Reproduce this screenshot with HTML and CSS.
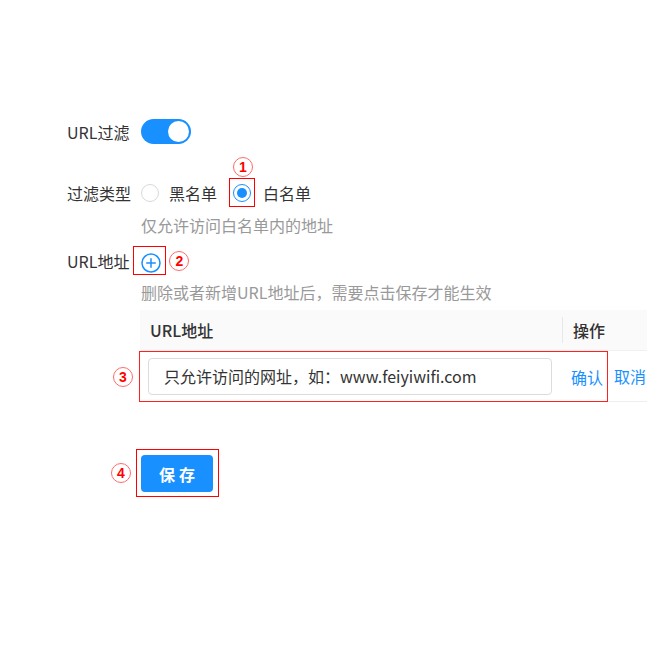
FILE: index.html
```html
<!DOCTYPE html>
<html lang="zh-CN">
<head>
<meta charset="utf-8">
<title>URL过滤</title>
<link rel="stylesheet" href="styles.css">
</head>
<body>
<div class="form">
  <div class="row row-switch">
    <span class="label">URL过滤</span>
    <span class="switch"><span class="knob"></span></span>
  </div>

  <div class="row row-type">
    <span class="label">过滤类型</span>
    <span class="radio"></span>
    <span class="radio-text">黑名单</span>
    <span class="red-box radio-box">
      <span class="radio checked"><span class="dot"></span></span>
      <span class="badge badge-top">1</span>
    </span>
    <span class="radio-text">白名单</span>
  </div>
  <div class="hint">仅允许访问白名单内的地址</div>

  <div class="row row-url">
    <span class="label label-auto">URL地址</span>
    <span class="red-box plus-box">
      <svg class="plus" width="20" height="20" viewBox="0 0 20 20">
        <circle cx="10" cy="10" r="9" fill="none" stroke="#1890ff" stroke-width="1.5"/>
        <path d="M10 5.2v9.6M5.2 10h9.6" stroke="#1890ff" stroke-width="1.5" fill="none"/>
      </svg>
    </span>
    <span class="badge badge-inline">2</span>
  </div>
  <div class="hint">删除或者新增URL地址后，需要点击保存才能生效</div>

  <div class="table">
    <div class="thead">
      <div class="th th-url">URL地址</div>
      <div class="th th-op">操作</div>
    </div>
    <div class="trow">
      <div class="edit-box">
        <span class="badge badge-left">3</span>
        <div class="input">只允许访问的网址，如：www.feiyiwifi.com</div>
        <span class="link link-ok">确认</span>
      </div>
      <span class="link link-cancel">取消</span>
    </div>
  </div>

  <div class="save-row">
    <div class="red-box save-box">
      <span class="badge badge-left">4</span>
      <button class="save">保存</button>
    </div>
  </div>
</div>
</body>
</html>
```

FILE: styles.css
```css
* { box-sizing: border-box; }
html, body { margin: 0; padding: 0; background: #fff; }
body {
  font-family: "Noto Sans CJK SC", "Noto Sans", sans-serif;
  font-size: 16px;
  line-height: 22px;
  color: #333;
}
.form { padding: 119px 0 0 67px; }

.row { display: flex; align-items: center; }
.label { width: 74px; flex: none; color: #333; }
.label-auto { width: auto; margin-right: 4px; }

.row-switch { height: 25px; }
.switch {
  width: 50px; height: 25px; border-radius: 13px;
  background: #1890ff; display: flex; align-items: center;
  justify-content: flex-end; padding-right: 2px;
}
.knob { width: 21px; height: 21px; border-radius: 50%; background: #fff; }

.row-type { margin-top: 34px; height: 29px; }
.radio {
  width: 18px; height: 18px; border-radius: 50%;
  border: 1px solid #d9d9d9; background: #fff; flex: none;
  display: flex; align-items: center; justify-content: center;
}
.radio.checked { border-color: #1890ff; }
.dot { width: 10px; height: 10px; border-radius: 50%; background: #1890ff; }
.radio-text { margin-left: 10px; }
.row-type .radio-text + .red-box { margin-left: 12px; }
.radio-box + .radio-text { margin-left: 8px; }

.red-box { border: 1px solid #f00; position: relative; }
.radio-box { padding: 5px 3px 4px 3px; display: flex; }

.badge {
  width: 20px; height: 20px; border-radius: 50%;
  border: 1px solid #ff6b6b; color: #f00;
  font-family: "Liberation Sans", Arial, sans-serif;
  font-weight: bold; font-size: 14px; line-height: 18px;
  text-align: center; flex: none; background: #fff;
}
.badge-top {
  position: absolute; left: 3px; bottom: calc(100% + 2px);
}
.badge-inline { margin-left: 3px; }
.badge-left {
  position: absolute; right: calc(100% + 6px); top: 50%; margin-top: -10px;
}

.hint { margin-left: 74px; color: #999; }
.row-type + .hint { margin-top: 7px; }

.row-url { margin-top: 10px; height: 29px; }
.plus-box { display: flex; padding: 6px 4px 1px 7px; }
.plus { display: block; }
.row-url + .hint { margin-top: 6px; }

.table { margin: 7px 0 0 73px; width: 507px; }
.thead {
  display: flex; align-items: center; height: 41px;
  background: #fafafa; border-bottom: 1px solid #f0f0f0;
}
.th { font-weight: 500; color: #333; padding-left: 10px; }
.th-url { width: 422px; }
.th-op { flex: 1; border-left: 1px solid #e8e8e8; height: 26px; line-height: 26px; }
.trow {
  display: flex; align-items: center; height: 51px;
  border-bottom: 1px solid #eee;
}
.edit-box {
  position: relative;
  display: flex; align-items: center; height: 51px;
  outline: 1px solid #ff2020; outline-offset: -1px;
  margin-left: -1px; margin-bottom: -1px; padding: 0 3px 0 9px; width: 469px;
}
.input {
  width: 404px; height: 37px; border: 1px solid #dcdcdc; border-radius: 4px;
  padding: 0 15px; line-height: 35px; color: #333; background: #fff;
}
.link { color: #1890ff; white-space: nowrap; }
.link-ok { margin-left: 19px; }
.link-cancel { margin-left: 6px; }

.save-row { margin: 47px 0 0 69px; display: flex; }
.save-box { padding: 5px 5px 4px 4px; display: flex; }
.save {
  width: 72px; height: 37px; border: none; border-radius: 4px;
  background: #1890ff; color: #fff; font-family: inherit;
  font-size: 16px; font-weight: bold; letter-spacing: 4px; padding: 0 0 0 4px;
}
```
